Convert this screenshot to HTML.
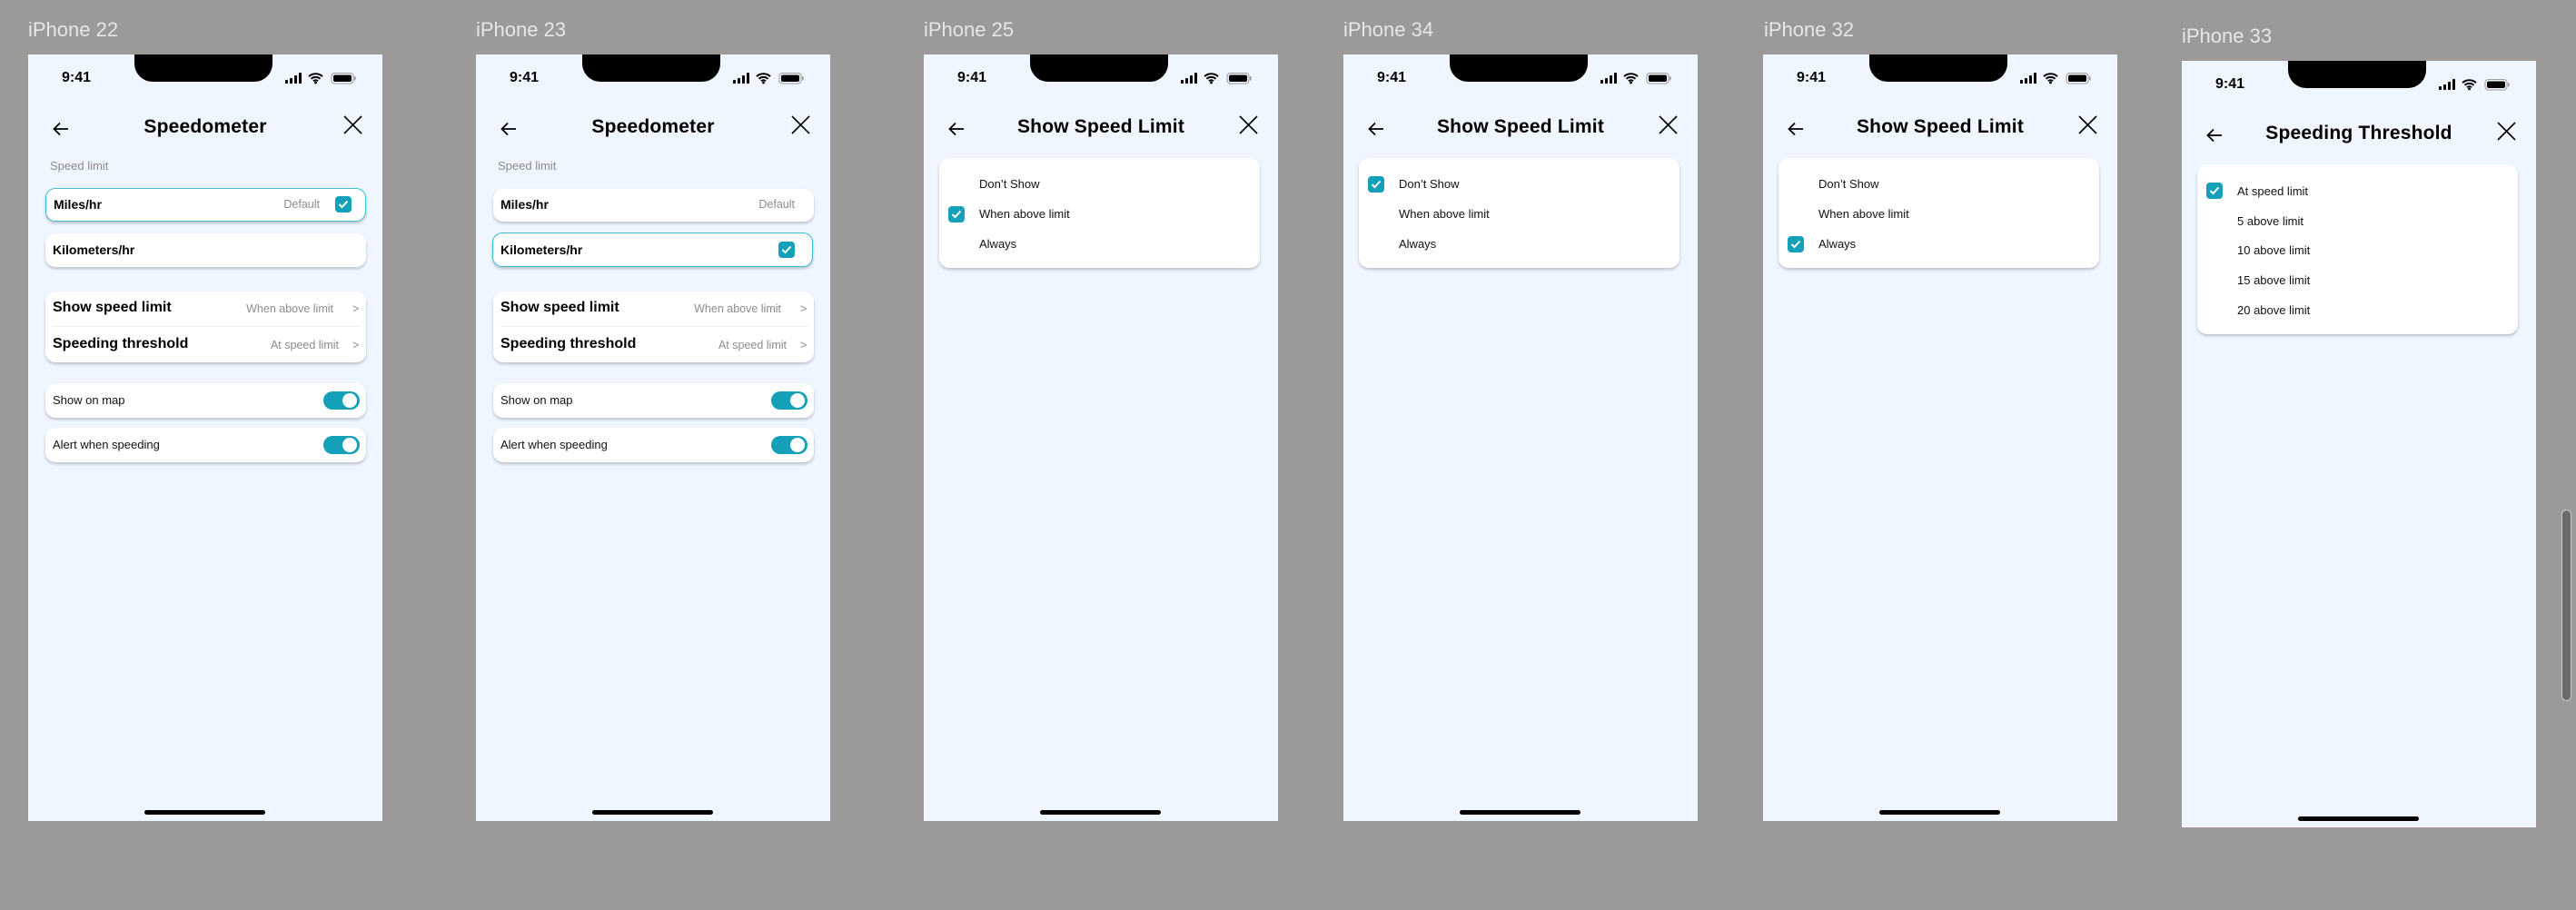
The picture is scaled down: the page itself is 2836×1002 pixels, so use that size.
<!DOCTYPE html>
<html><head><meta charset="utf-8">
<style>
*{margin:0;padding:0;box-sizing:border-box}
body{width:2836px;height:1002px;background:#9b9a98;position:relative;overflow:hidden;font-family:"Liberation Sans",Arial,sans-serif}
.lbl{position:absolute;color:#e6e6e6;font-size:22px;}
.ph{position:absolute;width:390px;height:844px;background:#eff6ff;overflow:hidden}
.notch{position:absolute;left:117px;top:0;width:152px;height:30px;background:#000;border-radius:0 0 20px 20px}
.time{position:absolute;left:37px;top:17px;font-size:16px;font-weight:bold;color:#000}
.st{position:absolute;left:283px;top:20px}
.back{position:absolute;left:27px;top:74px}
.close{position:absolute;left:347px;top:67px}
.title{position:absolute;left:0;width:390px;top:68px;text-align:center;font-size:21px;font-weight:bold;color:#000;letter-spacing:0.2px}
.home{position:absolute;left:128px;top:832px;width:133px;height:5px;border-radius:3px;background:#000}
.card{position:absolute;left:19px;width:353px;background:#fff;border-radius:11px;box-shadow:0 2px 3px rgba(0,0,0,0.22)}
.sel{border:1.3px solid #3bbfd0}
.sm{position:absolute;left:24px;top:115px;font-size:13px;color:#8a8a8a}
.b14{position:absolute;left:8px;font-size:14px;font-weight:bold;color:#000}
.b16{position:absolute;left:8px;font-size:16px;font-weight:bold;color:#000}
.gr{position:absolute;font-size:12.5px;color:#8c8c8c;white-space:nowrap}
.r13{position:absolute;left:8px;font-size:13px;color:#111}
.cb{position:absolute;width:18px;height:18px;border-radius:4px;background:#14a0b8}
.cb svg{position:absolute;left:3px;top:4px}
.tg{position:absolute;left:306px;width:40px;height:20px;border-radius:10px;background:#14a0b8}
.tg:after{content:"";position:absolute;right:3px;top:2px;width:16px;height:16px;border-radius:50%;background:#fff}
.opt{position:absolute;left:44px;font-size:13px;color:#111}
.scroll{position:absolute;left:2820px;top:561px;width:11px;height:211px;border-radius:6px;background:#6b6a69;border:1px solid #c8c8c8}
</style></head><body>

<div class="lbl" style="left:31px;top:20px">iPhone 22</div>
<div class="lbl" style="left:524px;top:20px">iPhone 23</div>
<div class="lbl" style="left:1017px;top:20px">iPhone 25</div>
<div class="lbl" style="left:1479px;top:20px">iPhone 34</div>
<div class="lbl" style="left:1942px;top:20px">iPhone 32</div>
<div class="lbl" style="left:2402px;top:27px">iPhone 33</div>

<!-- iPhone 22 -->
<div class="ph" style="left:31px;top:60px">
 <div class="notch"></div><div class="time">9:41</div>
 <svg class="st" width="78" height="13" viewBox="0 0 78 13"><rect x="0" y="8" width="3" height="4" rx=".8"/><rect x="5" y="6" width="3" height="6" rx=".8"/><rect x="10" y="3" width="3" height="9" rx=".8"/><rect x="15" y="0" width="3" height="12" rx=".8"/><path d="M26 4.2a11 11 0 0 1 15 0M28.5 6.8a7.4 7.4 0 0 1 10 0M31 9.3a3.6 3.6 0 0 1 5 0" stroke="#000" stroke-width="2" fill="none"/><circle cx="33.5" cy="11" r="1.4"/><rect x="51" y="0.5" width="24" height="11.5" rx="3.5" fill="none" stroke="#999"/><rect x="53" y="2.5" width="20" height="7.5" rx="2"/><rect x="76" y="4" width="1.6" height="4.5" rx=".8" fill="#999"/></svg>
 <svg class="back" width="18" height="16" viewBox="0 0 18 16"><path d="M17 8H2M8 1.5 1.5 8 8 14.5" stroke="#000" stroke-width="1.8" fill="none"/></svg>
 <div class="title">Speedometer</div>
 <svg class="close" width="21" height="21" viewBox="0 0 21 21"><path d="M1 1 20 20M20 1 1 20" stroke="#000" stroke-width="1.6"/></svg>
 <div class="sm">Speed limit</div>
 <div class="card sel" style="top:147px;height:37px"><div class="b14" style="top:9px">Miles/hr</div><div class="gr" style="right:50px;top:10px">Default</div><div class="cb" style="left:318px;top:8px"><svg width="12" height="10" viewBox="0 0 12 10"><path d="M1.5 5 4.5 8 10.5 1.5" stroke="#fff" stroke-width="2" fill="none"/></svg></div></div>
 <div class="card" style="top:197px;height:37px"><div class="b14" style="top:10px">Kilometers/hr</div></div>
 <div class="card" style="top:261px;height:78px"><div class="b16" style="top:9px">Show speed limit</div><div class="gr" style="right:36px;top:12px">When above limit</div><div class="gr" style="left:338px;top:12px">&gt;</div><div style="position:absolute;left:8px;right:6px;top:38px;height:1px;background:#eee"></div><div class="b16" style="top:49px">Speeding threshold</div><div class="gr" style="right:30px;top:52px">At speed limit</div><div class="gr" style="left:338px;top:52px">&gt;</div></div>
 <div class="card" style="top:362px;height:38px"><div class="r13" style="top:11px">Show on map</div><div class="tg" style="top:9px"></div></div>
 <div class="card" style="top:411px;height:38px"><div class="r13" style="top:11px">Alert when speeding</div><div class="tg" style="top:9px"></div></div>
 <div class="home"></div>
</div>

<!-- iPhone 23 -->
<div class="ph" style="left:524px;top:60px">
 <div class="notch"></div><div class="time">9:41</div>
 <svg class="st" width="78" height="13" viewBox="0 0 78 13"><rect x="0" y="8" width="3" height="4" rx=".8"/><rect x="5" y="6" width="3" height="6" rx=".8"/><rect x="10" y="3" width="3" height="9" rx=".8"/><rect x="15" y="0" width="3" height="12" rx=".8"/><path d="M26 4.2a11 11 0 0 1 15 0M28.5 6.8a7.4 7.4 0 0 1 10 0M31 9.3a3.6 3.6 0 0 1 5 0" stroke="#000" stroke-width="2" fill="none"/><circle cx="33.5" cy="11" r="1.4"/><rect x="51" y="0.5" width="24" height="11.5" rx="3.5" fill="none" stroke="#999"/><rect x="53" y="2.5" width="20" height="7.5" rx="2"/><rect x="76" y="4" width="1.6" height="4.5" rx=".8" fill="#999"/></svg>
 <svg class="back" width="18" height="16" viewBox="0 0 18 16"><path d="M17 8H2M8 1.5 1.5 8 8 14.5" stroke="#000" stroke-width="1.8" fill="none"/></svg>
 <div class="title">Speedometer</div>
 <svg class="close" width="21" height="21" viewBox="0 0 21 21"><path d="M1 1 20 20M20 1 1 20" stroke="#000" stroke-width="1.6"/></svg>
 <div class="sm">Speed limit</div>
 <div class="card" style="top:148px;height:36px"><div class="b14" style="top:9px">Miles/hr</div><div class="gr" style="right:21px;top:10px">Default</div></div>
 <div class="card sel" style="top:196px;height:38px;left:18px"><div class="b14" style="top:10px">Kilometers/hr</div><div class="cb" style="left:314px;top:9px"><svg width="12" height="10" viewBox="0 0 12 10"><path d="M1.5 5 4.5 8 10.5 1.5" stroke="#fff" stroke-width="2" fill="none"/></svg></div></div>
 <div class="card" style="top:261px;height:78px"><div class="b16" style="top:9px">Show speed limit</div><div class="gr" style="right:36px;top:12px">When above limit</div><div class="gr" style="left:338px;top:12px">&gt;</div><div style="position:absolute;left:8px;right:6px;top:38px;height:1px;background:#eee"></div><div class="b16" style="top:49px">Speeding threshold</div><div class="gr" style="right:30px;top:52px">At speed limit</div><div class="gr" style="left:338px;top:52px">&gt;</div></div>
 <div class="card" style="top:362px;height:38px"><div class="r13" style="top:11px">Show on map</div><div class="tg" style="top:9px"></div></div>
 <div class="card" style="top:411px;height:38px"><div class="r13" style="top:11px">Alert when speeding</div><div class="tg" style="top:9px"></div></div>
 <div class="home"></div>
</div>

<!-- iPhone 25 -->
<div class="ph" style="left:1017px;top:60px">
 <div class="notch"></div><div class="time">9:41</div>
 <svg class="st" width="78" height="13" viewBox="0 0 78 13"><rect x="0" y="8" width="3" height="4" rx=".8"/><rect x="5" y="6" width="3" height="6" rx=".8"/><rect x="10" y="3" width="3" height="9" rx=".8"/><rect x="15" y="0" width="3" height="12" rx=".8"/><path d="M26 4.2a11 11 0 0 1 15 0M28.5 6.8a7.4 7.4 0 0 1 10 0M31 9.3a3.6 3.6 0 0 1 5 0" stroke="#000" stroke-width="2" fill="none"/><circle cx="33.5" cy="11" r="1.4"/><rect x="51" y="0.5" width="24" height="11.5" rx="3.5" fill="none" stroke="#999"/><rect x="53" y="2.5" width="20" height="7.5" rx="2"/><rect x="76" y="4" width="1.6" height="4.5" rx=".8" fill="#999"/></svg>
 <svg class="back" width="18" height="16" viewBox="0 0 18 16"><path d="M17 8H2M8 1.5 1.5 8 8 14.5" stroke="#000" stroke-width="1.8" fill="none"/></svg>
 <div class="title">Show Speed Limit</div>
 <svg class="close" width="21" height="21" viewBox="0 0 21 21"><path d="M1 1 20 20M20 1 1 20" stroke="#000" stroke-width="1.6"/></svg>
 <div class="card" style="left:17px;top:114px;height:121px">
  <div class="opt" style="top:21px">Don’t Show</div>
  <div class="cb" style="left:10px;top:53px"><svg width="12" height="10" viewBox="0 0 12 10"><path d="M1.5 5 4.5 8 10.5 1.5" stroke="#fff" stroke-width="2" fill="none"/></svg></div>
  <div class="opt" style="top:54px">When above limit</div>
  <div class="opt" style="top:87px">Always</div>
 </div>
 <div class="home"></div>
</div>

<!-- iPhone 34 -->
<div class="ph" style="left:1479px;top:60px">
 <div class="notch"></div><div class="time">9:41</div>
 <svg class="st" width="78" height="13" viewBox="0 0 78 13"><rect x="0" y="8" width="3" height="4" rx=".8"/><rect x="5" y="6" width="3" height="6" rx=".8"/><rect x="10" y="3" width="3" height="9" rx=".8"/><rect x="15" y="0" width="3" height="12" rx=".8"/><path d="M26 4.2a11 11 0 0 1 15 0M28.5 6.8a7.4 7.4 0 0 1 10 0M31 9.3a3.6 3.6 0 0 1 5 0" stroke="#000" stroke-width="2" fill="none"/><circle cx="33.5" cy="11" r="1.4"/><rect x="51" y="0.5" width="24" height="11.5" rx="3.5" fill="none" stroke="#999"/><rect x="53" y="2.5" width="20" height="7.5" rx="2"/><rect x="76" y="4" width="1.6" height="4.5" rx=".8" fill="#999"/></svg>
 <svg class="back" width="18" height="16" viewBox="0 0 18 16"><path d="M17 8H2M8 1.5 1.5 8 8 14.5" stroke="#000" stroke-width="1.8" fill="none"/></svg>
 <div class="title">Show Speed Limit</div>
 <svg class="close" width="21" height="21" viewBox="0 0 21 21"><path d="M1 1 20 20M20 1 1 20" stroke="#000" stroke-width="1.6"/></svg>
 <div class="card" style="left:17px;top:114px;height:121px">
  <div class="cb" style="left:10px;top:20px"><svg width="12" height="10" viewBox="0 0 12 10"><path d="M1.5 5 4.5 8 10.5 1.5" stroke="#fff" stroke-width="2" fill="none"/></svg></div>
  <div class="opt" style="top:21px">Don’t Show</div>
  <div class="opt" style="top:54px">When above limit</div>
  <div class="opt" style="top:87px">Always</div>
 </div>
 <div class="home"></div>
</div>

<!-- iPhone 32 -->
<div class="ph" style="left:1941px;top:60px">
 <div class="notch"></div><div class="time">9:41</div>
 <svg class="st" width="78" height="13" viewBox="0 0 78 13"><rect x="0" y="8" width="3" height="4" rx=".8"/><rect x="5" y="6" width="3" height="6" rx=".8"/><rect x="10" y="3" width="3" height="9" rx=".8"/><rect x="15" y="0" width="3" height="12" rx=".8"/><path d="M26 4.2a11 11 0 0 1 15 0M28.5 6.8a7.4 7.4 0 0 1 10 0M31 9.3a3.6 3.6 0 0 1 5 0" stroke="#000" stroke-width="2" fill="none"/><circle cx="33.5" cy="11" r="1.4"/><rect x="51" y="0.5" width="24" height="11.5" rx="3.5" fill="none" stroke="#999"/><rect x="53" y="2.5" width="20" height="7.5" rx="2"/><rect x="76" y="4" width="1.6" height="4.5" rx=".8" fill="#999"/></svg>
 <svg class="back" width="18" height="16" viewBox="0 0 18 16"><path d="M17 8H2M8 1.5 1.5 8 8 14.5" stroke="#000" stroke-width="1.8" fill="none"/></svg>
 <div class="title">Show Speed Limit</div>
 <svg class="close" width="21" height="21" viewBox="0 0 21 21"><path d="M1 1 20 20M20 1 1 20" stroke="#000" stroke-width="1.6"/></svg>
 <div class="card" style="left:17px;top:114px;height:121px">
  <div class="opt" style="top:21px">Don’t Show</div>
  <div class="opt" style="top:54px">When above limit</div>
  <div class="cb" style="left:10px;top:86px"><svg width="12" height="10" viewBox="0 0 12 10"><path d="M1.5 5 4.5 8 10.5 1.5" stroke="#fff" stroke-width="2" fill="none"/></svg></div>
  <div class="opt" style="top:87px">Always</div>
 </div>
 <div class="home"></div>
</div>

<!-- iPhone 33 -->
<div class="ph" style="left:2402px;top:67px">
 <div class="notch"></div><div class="time">9:41</div>
 <svg class="st" width="78" height="13" viewBox="0 0 78 13"><rect x="0" y="8" width="3" height="4" rx=".8"/><rect x="5" y="6" width="3" height="6" rx=".8"/><rect x="10" y="3" width="3" height="9" rx=".8"/><rect x="15" y="0" width="3" height="12" rx=".8"/><path d="M26 4.2a11 11 0 0 1 15 0M28.5 6.8a7.4 7.4 0 0 1 10 0M31 9.3a3.6 3.6 0 0 1 5 0" stroke="#000" stroke-width="2" fill="none"/><circle cx="33.5" cy="11" r="1.4"/><rect x="51" y="0.5" width="24" height="11.5" rx="3.5" fill="none" stroke="#999"/><rect x="53" y="2.5" width="20" height="7.5" rx="2"/><rect x="76" y="4" width="1.6" height="4.5" rx=".8" fill="#999"/></svg>
 <svg class="back" width="18" height="16" viewBox="0 0 18 16"><path d="M17 8H2M8 1.5 1.5 8 8 14.5" stroke="#000" stroke-width="1.8" fill="none"/></svg>
 <div class="title">Speeding Threshold</div>
 <svg class="close" width="21" height="21" viewBox="0 0 21 21"><path d="M1 1 20 20M20 1 1 20" stroke="#000" stroke-width="1.6"/></svg>
 <div class="card" style="left:17px;top:114px;height:187px">
  <div class="cb" style="left:10px;top:20px"><svg width="12" height="10" viewBox="0 0 12 10"><path d="M1.5 5 4.5 8 10.5 1.5" stroke="#fff" stroke-width="2" fill="none"/></svg></div>
  <div class="opt" style="top:22px">At speed limit</div>
  <div class="opt" style="top:55px">5 above limit</div>
  <div class="opt" style="top:87px">10 above limit</div>
  <div class="opt" style="top:120px">15 above limit</div>
  <div class="opt" style="top:153px">20 above limit</div>
 </div>
 <div class="home"></div>
</div>

<div class="scroll"></div>
</body></html>
